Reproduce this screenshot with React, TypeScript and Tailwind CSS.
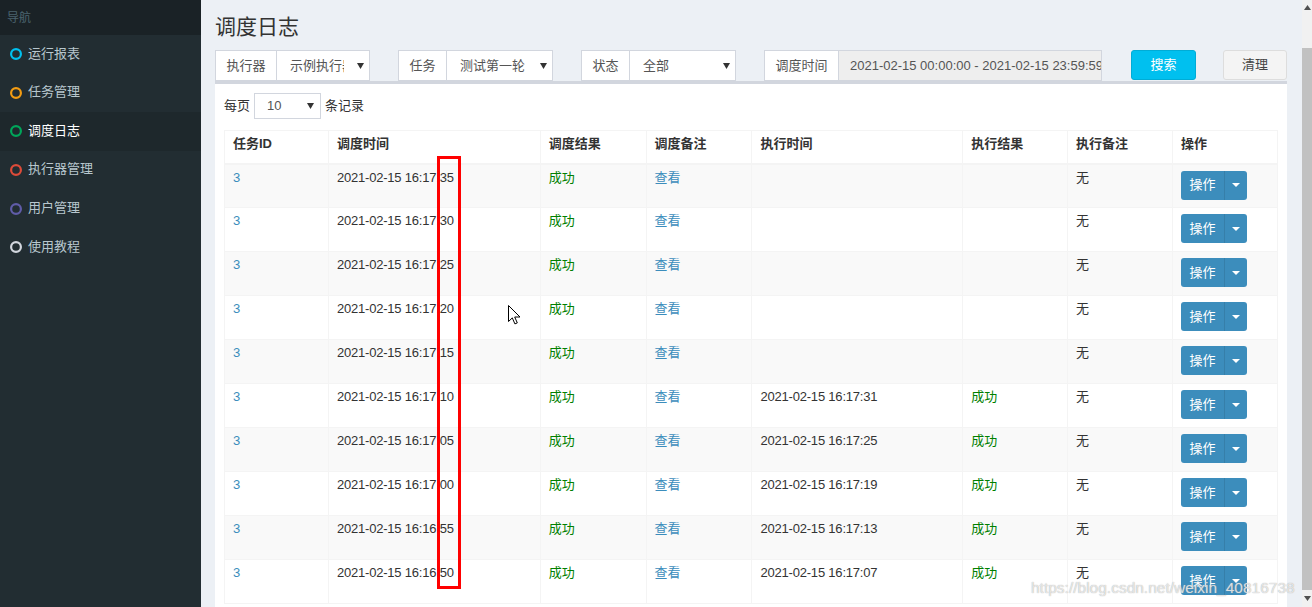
import React from "react";

const menu = [
  { label: "运行报表", color: "#00c0ef" },
  { label: "任务管理", color: "#f39c12" },
  { label: "调度日志", color: "#00a65a", active: true },
  { label: "执行器管理", color: "#dd4b39" },
  { label: "用户管理", color: "#605ca8" },
  { label: "使用教程", color: "#d2d6de" },
];

const rows = [
  { t: "2021-02-15 16:17:35", e: "" },
  { t: "2021-02-15 16:17:30", e: "" },
  { t: "2021-02-15 16:17:25", e: "" },
  { t: "2021-02-15 16:17:20", e: "" },
  { t: "2021-02-15 16:17:15", e: "" },
  { t: "2021-02-15 16:17:10", e: "2021-02-15 16:17:31" },
  { t: "2021-02-15 16:17:05", e: "2021-02-15 16:17:25" },
  { t: "2021-02-15 16:17:00", e: "2021-02-15 16:17:19" },
  { t: "2021-02-15 16:16:55", e: "2021-02-15 16:17:13" },
  { t: "2021-02-15 16:16:50", e: "2021-02-15 16:17:07" },
];

const cols = [
  { h: "任务ID", w: 104 },
  { h: "调度时间", w: 212 },
  { h: "调度结果", w: 106 },
  { h: "调度备注", w: 106 },
  { h: "执行时间", w: 211 },
  { h: "执行结果", w: 105 },
  { h: "执行备注", w: 105 },
  { h: "操作", w: 105 },
];

function Arrow() {
  return (
    <svg width="7" height="6" viewBox="0 0 7 6" className="shrink-0">
      <path d="M0 0h7L3.5 6z" fill="#333" />
    </svg>
  );
}

function Group({ label, value, w, lw, vw }: { label: string; value: string; w: number; lw: number; vw: number }) {
  return (
    <div className="flex h-[31px] border border-[#d2d6de] bg-white text-[13px] text-[#555]" style={{ width: w }}>
      <div className="flex shrink-0 items-center justify-center border-r border-[#d2d6de]" style={{ width: lw }}>
        {label}
      </div>
      <div className="flex flex-1 items-center pl-[13px] pr-[5px]">
        <span className="overflow-hidden whitespace-nowrap" style={{ width: vw }}>
          {value}
        </span>
        <span className="ml-auto">
          <Arrow />
        </span>
      </div>
    </div>
  );
}

const td = "border-x border-[#f4f4f4] px-[8px] pt-[3px] align-top leading-[20px]";

export default function App() {
  return (
    <div className="relative flex h-[607px] w-[1312px] overflow-hidden font-['Liberation_Sans','Noto_Sans_CJK_SC',sans-serif]">
      {/* sidebar */}
      <aside className="w-[201px] shrink-0 bg-[#222d32]">
        <div className="flex h-[35px] items-center bg-[#1a2226] pl-[7px] text-[12px] text-[#4b646f]">导航</div>
        {menu.map((m) => (
          <div
            key={m.label}
            className={`flex h-[38.6px] items-center gap-[6px] pl-[10px] text-[13px] ${
              m.active ? "bg-[#1e282c] text-white" : "text-[#b8c7ce]"
            }`}
          >
            <svg width="12" height="12" viewBox="0 0 12 12">
              <circle cx="6" cy="6" r="4.9" fill="none" stroke={m.color} strokeWidth="2.2" />
            </svg>
            <span className="-mt-[2px]">{m.label}</span>
          </div>
        ))}
      </aside>

      {/* content */}
      <main className="w-[1101px] shrink-0 bg-[#ecf0f5] pl-[14px] pr-[15px]">
        <h1 className="pt-[12px] text-[21px] leading-[30px] text-[#333]">调度日志</h1>

        <div className="mt-[8px] flex items-start">
          <Group label="执行器" value="示例执行器" w={155} lw={61} vw={54} />
          <div className="ml-[28px]">
            <Group label="任务" value="测试第一轮" w={155} lw={48} vw={70} />
          </div>
          <div className="ml-[28px]">
            <Group label="状态" value="全部" w={155} lw={48} vw={60} />
          </div>
          <div className="ml-[28px] flex h-[31px] w-[338px] border border-[#d2d6de] text-[13px] text-[#555]">
            <div className="flex w-[74px] shrink-0 items-center justify-center border-r border-[#d2d6de] bg-white">调度时间</div>
            <div className="flex flex-1 items-center overflow-hidden whitespace-nowrap bg-[#eee] pl-[11px]">
              2021-02-15 00:00:00 - 2021-02-15 23:59:59
            </div>
          </div>
          <button className="ml-[29px] flex h-[30px] w-[65px] items-center justify-center rounded-[3px] border border-[#00acd6] bg-[#00c0ef] text-[13px] text-white">
            搜索
          </button>
          <button className="ml-[27px] flex h-[30px] w-[64px] items-center justify-center rounded-[3px] border border-[#ddd] bg-[#f4f4f4] text-[13px] text-[#444]">
            清理
          </button>
        </div>

        <section className="h-[600px] border-t-[3px] border-[#d2d6de] bg-white px-[9px] pt-[9px]">
          <div className="flex items-center text-[13px] text-[#333]">
            <span>每页</span>
            <div className="mx-[4px] flex h-[26px] w-[67px] items-center border border-[#d2d6de] pl-[12px] pr-[6px] text-[#555]">
              <span>10</span>
              <span className="ml-auto">
                <Arrow />
              </span>
            </div>
            <span>条记录</span>
          </div>

          <table className="mt-[11px] table-fixed border-collapse border border-[#f4f4f4] text-[13px] text-[#333]">
            <colgroup>
              {cols.map((c) => (
                <col key={c.h} style={{ width: c.w }} />
              ))}
            </colgroup>
            <thead>
              <tr className="h-[33px] border-b-2 border-[#f4f4f4]">
                {cols.map((c) => (
                  <th key={c.h} className="border-x border-[#f4f4f4] px-[8px] pt-[3px] text-left align-top font-bold leading-[20px]">
                    {c.h}
                  </th>
                ))}
              </tr>
            </thead>
            <tbody>
              {rows.map((r, i) => (
                <tr key={r.t} className={`h-[44px] border-t border-[#f4f4f4] ${i % 2 === 0 ? "bg-[#f9f9f9]" : "bg-white"}`}>
                  <td className={`${td} text-[#3c8dbc]`}>3</td>
                  <td className={`${td} tracking-[-0.2px]`}>{r.t}</td>
                  <td className={`${td} text-[#008000]`}>成功</td>
                  <td className={`${td} text-[#3c8dbc]`}>查看</td>
                  <td className={`${td} tracking-[-0.2px]`}>{r.e}</td>
                  <td className={`${td} text-[#008000]`}>{r.e ? "成功" : ""}</td>
                  <td className={td}>无</td>
                  <td className="border-x border-[#f4f4f4] px-[8px] pt-[6px] align-top">
                    <div className="flex h-[29px] w-[66px] overflow-hidden rounded-[3px] bg-[#3c8dbc] text-[13px] text-white">
                      <div className="flex w-[43px] items-center justify-center">操作</div>
                      <div className="flex flex-1 items-center justify-center border-l border-[#367fa9]">
                        <svg width="8" height="4" viewBox="0 0 8 4">
                          <path d="M0 0h8L4 4z" fill="#fff" />
                        </svg>
                      </div>
                    </div>
                  </td>
                </tr>
              ))}
            </tbody>
          </table>
        </section>
      </main>

      {/* scrollbar */}
      <div className="flex w-[10px] shrink-0 flex-col items-center bg-[#f1f1f1]">
        <svg width="7" height="5" viewBox="0 0 7 5" className="mt-[5px]">
          <path d="M0 5h7L3.5 0z" fill="#505050" />
        </svg>
        <div className="mt-[38px] h-[542px] w-full bg-[#c1c1c1]" />
        <svg width="7" height="5" viewBox="0 0 7 5" className="mt-[6px]">
          <path d="M0 0h7L3.5 5z" fill="#505050" />
        </svg>
      </div>

      {/* annotation box */}
      <div className="pointer-events-none absolute left-[437px] top-[156px] h-[433px] w-[24px] border-[3px] border-[#ff0000]" />

      {/* mouse cursor */}
      <svg className="pointer-events-none absolute left-[508px] top-[305px]" width="13" height="20" viewBox="0 0 13 20">
        <path d="M0.5 0.5v16l3.8-3.6 2.6 6 2.4-1-2.6-5.9h5.3z" fill="#fff" stroke="#000" strokeWidth="1" strokeLinejoin="round" />
      </svg>

      {/* watermark */}
      <div className="pointer-events-none absolute left-[1031px] top-[576px] whitespace-nowrap text-[15.5px] text-[#ffffff]/70 [text-shadow:0_0_1px_#9a9a9a]">
        https://blog.csdn.net/weixin_40816738
      </div>
    </div>
  );
}
